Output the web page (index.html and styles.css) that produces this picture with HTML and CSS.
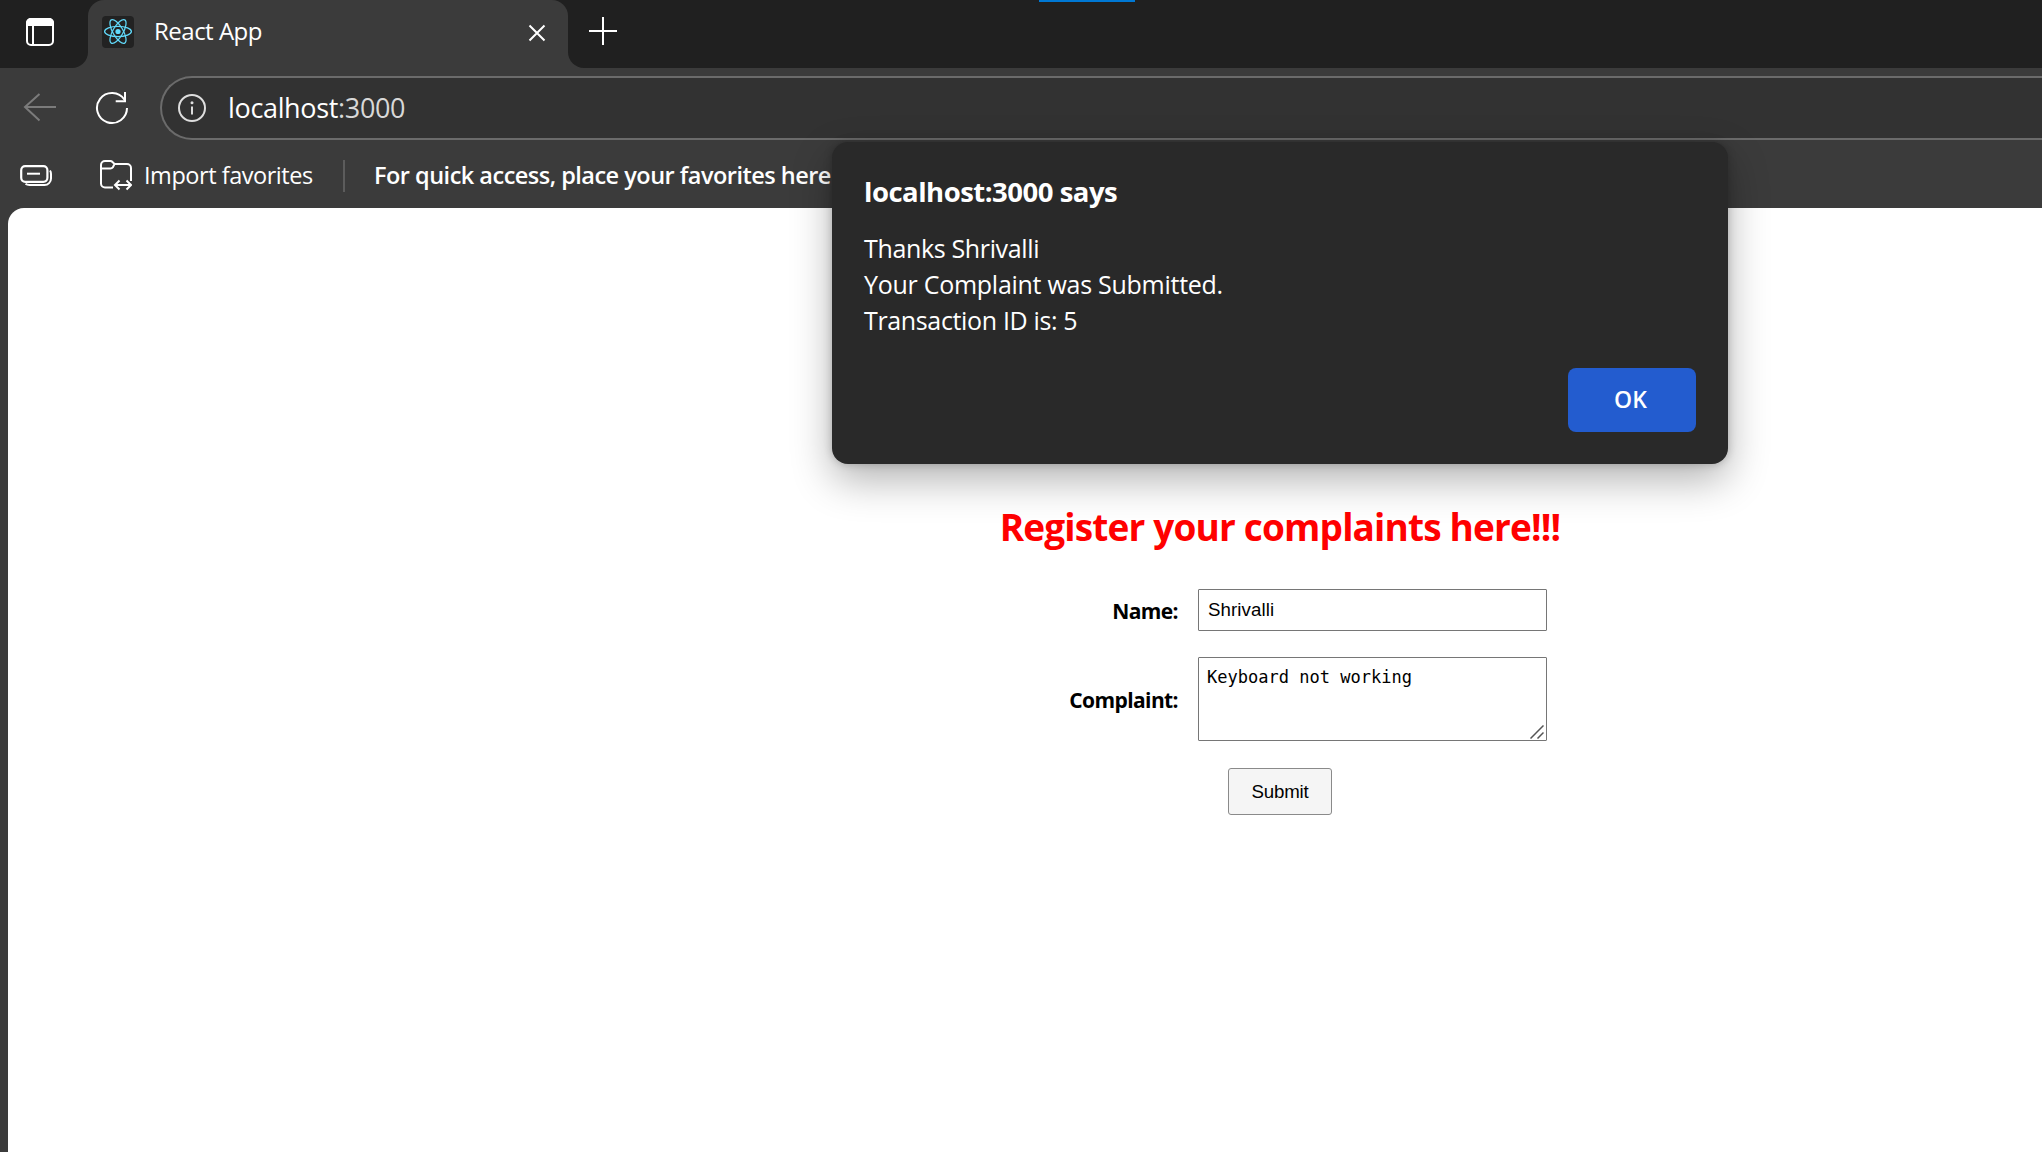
FILE: index.html
```html
<!DOCTYPE html>
<html lang="en">
<head>
<meta charset="utf-8">
<title>React App</title>
<link rel="stylesheet" href="styles.css">
</head>
<body>
<div class="window">
  <header class="tabstrip">
    <div class="tab-actions">
      <svg width="28" height="28" viewBox="0 0 28 28"><rect x="1" y="1" width="26" height="26" rx="4" fill="none" stroke="#fff" stroke-width="2"/><path d="M0 8V5a5 5 0 0 1 5-5h18a5 5 0 0 1 5 5v3z" fill="#fff"/><path d="M7 7v20" stroke="#fff" stroke-width="2"/></svg>
    </div>
    <div class="tab-slot">
      <div class="tab">
        <svg class="favicon" width="32" height="32" viewBox="0 0 32 32"><rect width="32" height="32" rx="4" fill="#222"/><g fill="none" stroke="#61dafb" stroke-width="1.25"><ellipse cx="16" cy="15.5" rx="13.4" ry="5.1"/><ellipse cx="16" cy="15.5" rx="13.4" ry="5.1" transform="rotate(60 16 15.5)"/><ellipse cx="16" cy="15.5" rx="13.4" ry="5.1" transform="rotate(120 16 15.5)"/></g><circle cx="16" cy="15.5" r="2.6" fill="#61dafb"/></svg>
        <span class="tab-title">React App</span>
        <svg class="close" width="18" height="18" viewBox="0 0 18 18"><path d="M1.5 1.5l15 15M16.5 1.5l-15 15" stroke="#fff" stroke-width="2"/></svg>
      </div>
    </div>
    <div class="tab-rest">
      <svg width="28" height="28" viewBox="0 0 28 28"><path d="M14 0v28M0 14h28" stroke="#fff" stroke-width="2"/></svg>
    </div>
    <div class="accent"></div>
  </header>
  <nav class="toolbar">
    <svg class="back" width="34" height="30" viewBox="0 0 34 30"><path d="M33 14H2M16.500 1L2 14l14.500 13.500" fill="none" stroke="#7b7b7b" stroke-width="2"/></svg>
    <svg class="reload" width="34" height="34" viewBox="0 0 34 34"><path d="M32 17A15 15 0 1 1 29.5 8.7" fill="none" stroke="#fff" stroke-width="2"/><path d="M30 1v9.3h-9.3" fill="none" stroke="#fff" stroke-width="2"/></svg>
    <div class="address">
      <svg width="28" height="28" viewBox="0 0 28 28"><circle cx="14" cy="14" r="13" fill="none" stroke="#dedede" stroke-width="2"/><circle cx="14" cy="8.8" r="1.5" fill="#dedede"/><path d="M14 12.5v8" stroke="#dedede" stroke-width="2"/></svg>
      <span class="url">localhost<span class="port">:3000</span></span>
    </div>
  </nav>
  <div class="favorites">
    <svg class="stack" width="32" height="22" viewBox="0 0 32 22"><rect x="1.2" y="1.2" width="26.2" height="15.6" rx="4" fill="none" stroke="#fff" stroke-width="2.2"/><path d="M7 8.700h13" stroke="#fff" stroke-width="2"/><path d="M30 5.500c.8 1 1 2 1 3.500v4.500a6.500 6.500 0 0 1-6.500 6.500H9.500c-1.600 0-3-.4-4-1.200" fill="none" stroke="#fff" stroke-width="2"/></svg>
    <svg class="folder" width="32" height="31" viewBox="0 0 32 31"><path d="M31 21V8a4 4 0 0 0-4-4H14.500l-2-2c-.6-.7-1.300-1-2.200-1H5a4 4 0 0 0-4 4v18.500a4 4 0 0 0 4 4h8M1 8.500h9.500c1 0 1.700-.4 2.300-1.100L14.500 4M15 25h16M19.500 20.500L15 25l4.500 4.500M26.500 20.500L31 25l-4.500 4.500" fill="none" stroke="#fff" stroke-width="2"/></svg>
    <span class="import">Import favorites</span>
    <span class="divider"></span>
    <span class="hint">For quick access, place your favorites here</span>
  </div>
  <main class="page">
    <h1 class="title">Register your complaints here!!!</h1>
    <form class="form">
      <label class="label" for="name">Name:</label>
      <input class="input" id="name" type="text" value="Shrivalli">
      <label class="label" for="complaint">Complaint:</label>
      <div class="area">
        <textarea class="textarea" id="complaint" spellcheck="false">Keyboard not working</textarea>
        <svg class="grip" width="14" height="14" viewBox="0 0 14 14"><path d="M.5 13.500l13-13M7.500 13.500l6-6" stroke="#555" stroke-width="1.500"/></svg>
      </div>
      <button class="submit" type="button">Submit</button>
    </form>
  </main>
  <section class="dialog" role="alertdialog">
    <h2 class="dialog-title">localhost:3000 says</h2>
    <p class="message"><span class="tight">Thanks Shrivalli</span><br>Your Complaint was Submitted.<br><span class="tight">Transaction ID is: 5</span></p>
    <button class="ok" type="button">OK</button>
  </section>
</div>
</body>
</html>
```
FILE: styles.css
```css
* { box-sizing: border-box; }
body { margin: 0; overflow: hidden; font-family: "Open Sans", "Noto Sans", sans-serif; }
svg { display: block; flex: none; }

.window { position: relative; width: 100%; height: 1152px; display: flex; flex-direction: column; background: #3b3b3b; color: #fff; }

.tabstrip { position: relative; display: flex; height: 68px; }
.tab-actions { width: 88px; padding: 18px 0 0 26px; background: #202020; border-bottom-right-radius: 16px; }
.tab-slot { width: 480px; background: #202020; }
.tab { display: flex; align-items: flex-start; height: 68px; padding: 16px 22px 0 14px; background: #3b3b3b; border-radius: 16px 16px 0 0; }
.tab-title { flex: 1; margin-left: 20px; font-size: 24px; line-height: 30px; letter-spacing: -0.5px; }
.close { margin-top: 8px; }
.tab-rest { flex: 1; padding: 17px 0 0 21px; background: #202020; border-bottom-left-radius: 16px; }
.accent { position: absolute; left: 1039px; top: 0; width: 96px; height: 2px; background: #0078d4; }

.toolbar { display: flex; align-items: center; height: 80px; padding: 0 0 0 23px; }
.reload { margin-left: 38px; }
.address { display: flex; align-items: center; gap: 22px; flex: 1; height: 64px; margin-left: 31px; padding-left: 16px; background: #323232; border: 2px solid #6b6b6b; border-radius: 32px 0 0 32px; border-right: 0; }
.url { font-size: 27px; line-height: 60px; letter-spacing: -0.34px; }
.port { color: #d8d8d8; }

.favorites { display: flex; align-items: center; height: 60px; padding-bottom: 5px; font-size: 23.5px; }
.import, .hint { padding-bottom: 2px; white-space: nowrap; }
.stack { margin-left: 20px; }
.folder { margin-left: 48px; }
.import { width: 168px; margin-left: 12px; letter-spacing: -0.46px; }
.divider { width: 2px; height: 32px; margin-left: 31px; background: #5c5c5c; }
.hint { margin-left: 29px; font-weight: 600; letter-spacing: -0.51px; }

.page { flex: 1; display: flex; flex-direction: column; align-items: center; margin-left: 8px; padding: 294px 0 0 510px; background: #fff; border-top-left-radius: 16px; color: #000; }
.title { margin: 0; font-size: 37px; line-height: 50px; letter-spacing: -0.84px; color: #f00; }
.form { display: grid; grid-template-columns: 165px 349px; grid-template-rows: 42px 84px 47px; gap: 26px 20px; margin-top: 37px; }
.label { align-self: center; padding-top: 2px; text-align: right; font-size: 21px; font-weight: 700; letter-spacing: -0.6px; }
.input, .textarea { display: block; width: 349px; height: 42px; margin: 0; border: 1px solid #767676; border-radius: 1px; background: #fff; color: #000; outline: 0; }
.input { padding: 0 9px 1px; font: 18.7px "Liberation Sans", Arial, sans-serif; letter-spacing: 0.09px; }
.area { position: relative; }
.textarea { height: 84px; padding: 8px 8px; resize: none; overflow: hidden; font: 17.05px/22px "DejaVu Sans Mono", monospace; }
.grip { position: absolute; right: 3px; bottom: 2px; }
.submit { grid-column: 1 / -1; justify-self: center; width: 104px; height: 47px; margin-top: 1px; padding: 0; border: 1px solid #8a8a8a; border-radius: 3px; background: #f5f5f5; color: #000; font: 18.7px "Liberation Sans", Arial, sans-serif; letter-spacing: -0.2px; }

.dialog { position: absolute; left: 832px; top: 142px; width: 896px; height: 322px; display: flex; flex-direction: column; padding: 32px; background: #292929; border-radius: 16px; box-shadow: 0 16px 40px rgba(0, 0, 0, 0.3), 0 0 8px rgba(0, 0, 0, 0.22); }
.dialog-title { margin: 0; font-size: 27.5px; line-height: 36px; letter-spacing: -0.5px; }
.message { margin: 20px 0 0; font-size: 25px; line-height: 36px; letter-spacing: -0.27px; }
.tight { letter-spacing: -0.35px; }
.ok { align-self: flex-end; width: 128px; height: 64px; margin-top: auto; padding: 0 3px 2px 0; border: 0; border-radius: 8px; background: #235ccf; color: #fff; font: 600 23px "Open Sans", sans-serif; }
```
